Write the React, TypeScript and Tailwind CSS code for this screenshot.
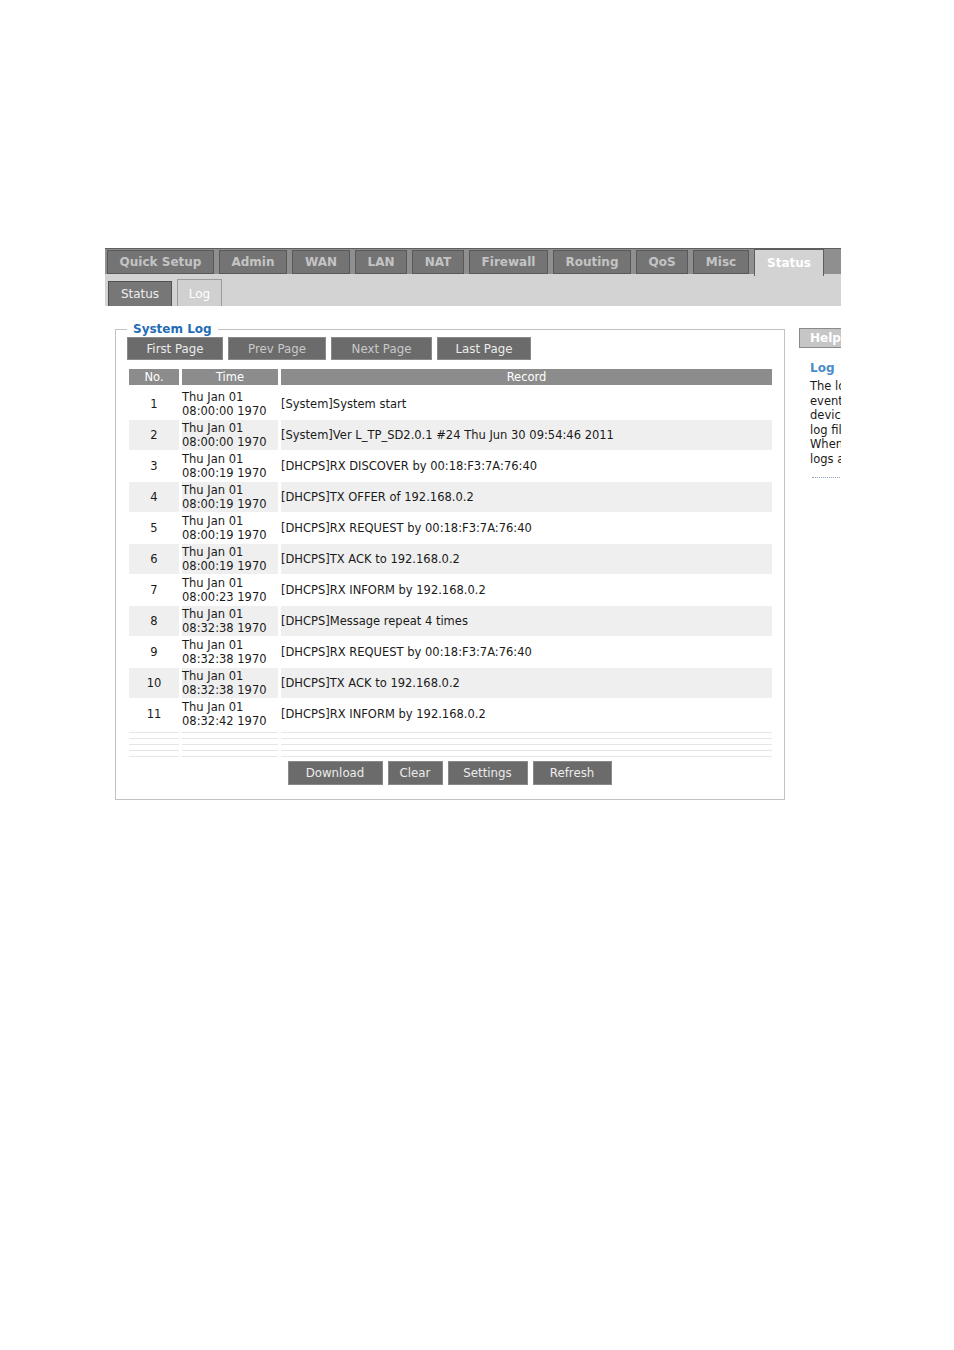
import React from "react"

const topTabs = [
  { label: "Quick Setup", w: "w-[107px]" },
  { label: "Admin", w: "w-[68px]" },
  { label: "WAN", w: "w-[58px]" },
  { label: "LAN", w: "w-[52px]" },
  { label: "NAT", w: "w-[52px]" },
  { label: "Firewall", w: "w-[79px]" },
  { label: "Routing", w: "w-[78px]" },
  { label: "QoS", w: "w-[52px]" },
  { label: "Misc", w: "w-[56px]" },
]

const rows = [
  ["08:00:00 1970", "[System]System start"],
  ["08:00:00 1970", "[System]Ver L_TP_SD2.0.1 #24 Thu Jun 30 09:54:46 2011"],
  ["08:00:19 1970", "[DHCPS]RX DISCOVER by 00:18:F3:7A:76:40"],
  ["08:00:19 1970", "[DHCPS]TX OFFER of 192.168.0.2"],
  ["08:00:19 1970", "[DHCPS]RX REQUEST by 00:18:F3:7A:76:40"],
  ["08:00:19 1970", "[DHCPS]TX ACK to 192.168.0.2"],
  ["08:00:23 1970", "[DHCPS]RX INFORM by 192.168.0.2"],
  ["08:32:38 1970", "[DHCPS]Message repeat 4 times"],
  ["08:32:38 1970", "[DHCPS]RX REQUEST by 00:18:F3:7A:76:40"],
  ["08:32:38 1970", "[DHCPS]TX ACK to 192.168.0.2"],
  ["08:32:42 1970", "[DHCPS]RX INFORM by 192.168.0.2"],
]

const pageButtons = [
  { label: "First Page", w: "w-[96px]", dim: false },
  { label: "Prev Page", w: "w-[98px]", dim: true },
  { label: "Next Page", w: "w-[101px]", dim: true },
  { label: "Last Page", w: "w-[94px]", dim: false },
]

const actionButtons = [
  { label: "Download", w: "w-[95px]" },
  { label: "Clear", w: "w-[55px]" },
  { label: "Settings", w: "w-[80px]" },
  { label: "Refresh", w: "w-[79px]" },
]

const helpLines = [
  "The log records all the",
  "events happened to the",
  "device, which are kept in",
  "log file of the router.",
  "When the file is full, old",
  "logs are overwritten.",
]

function GrayButton({
  label,
  w,
  h,
  dim,
}: {
  label: string
  w: string
  h: string
  dim?: boolean
}) {
  return (
    <button
      type="button"
      className={`${w} ${h} border border-[#8a8a8a] bg-[#6b6b6b] pt-[2px] text-[11.8px] leading-none ${
        dim ? "text-[#c9c9c9]" : "text-[#ececec]"
      }`}
    >
      {label}
    </button>
  )
}

export default function App() {
  return (
    <div
      className="min-h-[1350px] bg-white pt-[248px] text-[#1a1a1a]"
      style={{ fontFamily: '"DejaVu Sans", Verdana, sans-serif' }}
    >
      <div className="ml-[105px] w-[736px] overflow-hidden">
        {/* main tabs */}
        <div className="flex h-[26px] items-end gap-[5px] border-t border-[#5e5e5e] bg-[#8f8f8f] pl-[2px]">
          {topTabs.map((t) => (
            <div
              key={t.label}
              className={`${t.w} flex h-[24px] items-center justify-center border border-[#585858] bg-[#747474] text-[12px] font-bold text-[#c4c4c4]`}
            >
              {t.label}
            </div>
          ))}
          <div className="-mb-[2px] flex h-[27px] w-[70px] items-start justify-center border-x border-t border-[#5e5e5e] bg-[#d3d3d3] pt-[4px] text-[12px] font-bold text-white">
            Status
          </div>
        </div>

        {/* sub tabs */}
        <div className="flex h-[32px] items-end gap-[5px] bg-[#d3d3d3] pl-[3px]">
          <div className="flex h-[25px] w-[64px] items-center justify-center border-x border-t border-[#505050] bg-[#777777] text-[12px] text-[#ededed]">
            Status
          </div>
          <div className="flex h-[27px] w-[45px] items-start justify-center border-x border-t border-[#9c9c9c] bg-[#d0d0d0] pt-[5px] text-[12px] text-white">
            Log
          </div>
        </div>

        <div className="mt-[16px] flex items-start gap-[14px]">
          {/* system log */}
          <fieldset className="ml-[10px] w-[670px] shrink-0 border border-[#c2c2c2] pb-[14px] pl-[11px] pr-[12px]">
            <legend className="px-[6px] text-[12px] font-bold leading-[14px] text-[#1f6db5]">
              System Log
            </legend>

            <div className="mt-[1px] flex gap-[5px]">
              {pageButtons.map((b) => (
                <GrayButton key={b.label} label={b.label} w={b.w} h="h-[23px]" dim={b.dim} />
              ))}
            </div>

            <div className="ml-[2px] mt-[9px] grid grid-cols-[50px_96px_491px] gap-x-[3px] text-[11.5px]">
              <div className="flex h-[16px] items-center justify-center bg-[#8c8c8c] pt-[1px] text-white">No.</div>
              <div className="flex h-[16px] items-center justify-center bg-[#8c8c8c] pt-[1px] text-white">Time</div>
              <div className="flex h-[16px] items-center justify-center bg-[#8c8c8c] pt-[1px] text-white">Record</div>
            </div>

            <div className="ml-[2px] mt-[4px] grid grid-cols-[50px_96px_491px] gap-x-[3px] gap-y-[1px] text-[11.5px] leading-[14px]">
              {rows.map((r, i) => {
                const bg = i % 2 === 1 ? "bg-[#efefef]" : "bg-white"
                return (
                  <React.Fragment key={i}>
                    <div className={`${bg} flex h-[30px] items-center justify-center`}>{i + 1}</div>
                    <div className={`${bg} flex h-[30px] flex-col justify-center`}>
                      <span>Thu Jan 01</span>
                      <span>{r[0]}</span>
                    </div>
                    <div className={`${bg} flex h-[30px] items-center`}>{r[1]}</div>
                  </React.Fragment>
                )
              })}
            </div>

            <div className="ml-[2px] mt-[3px] grid grid-cols-[50px_96px_491px] gap-x-[3px]">
              {[0, 1, 2].map((c) => (
                <div key={c} className="flex flex-col">
                  {[0, 1, 2, 3].map((k) => (
                    <div key={k} className="h-[6px] border-t border-[#e6e6e6]" />
                  ))}
                  <div className="border-t border-[#e6e6e6]" />
                </div>
              ))}
            </div>

            <div className="mt-[4px] flex justify-center gap-[5px]">
              {actionButtons.map((b) => (
                <GrayButton key={b.label} label={b.label} w={b.w} h="h-[24px]" />
              ))}
            </div>
          </fieldset>

          {/* help */}
          <div className="mt-[6px] w-[160px] shrink-0">
            <div className="flex h-[20px] items-center border border-[#8a8a8a] bg-[#c6c6c6] pl-[10px] text-[12px] font-bold text-white">
              Help
            </div>
            <div className="mt-[13px] pl-[11px] text-[12px] font-bold leading-[14px] text-[#4a8bc9]">Log</div>
            <div className="mt-[4px] pl-[11px] text-[11.5px] leading-[14.6px] text-[#1a1a1a]">
              {helpLines.map((l) => (
                <div key={l} className="whitespace-nowrap">
                  {l}
                </div>
              ))}
            </div>
            <div className="ml-[13px] mt-[10px] w-[30px] border-t border-dotted border-[#8aa4c0]" />
          </div>
        </div>
      </div>
    </div>
  )
}
